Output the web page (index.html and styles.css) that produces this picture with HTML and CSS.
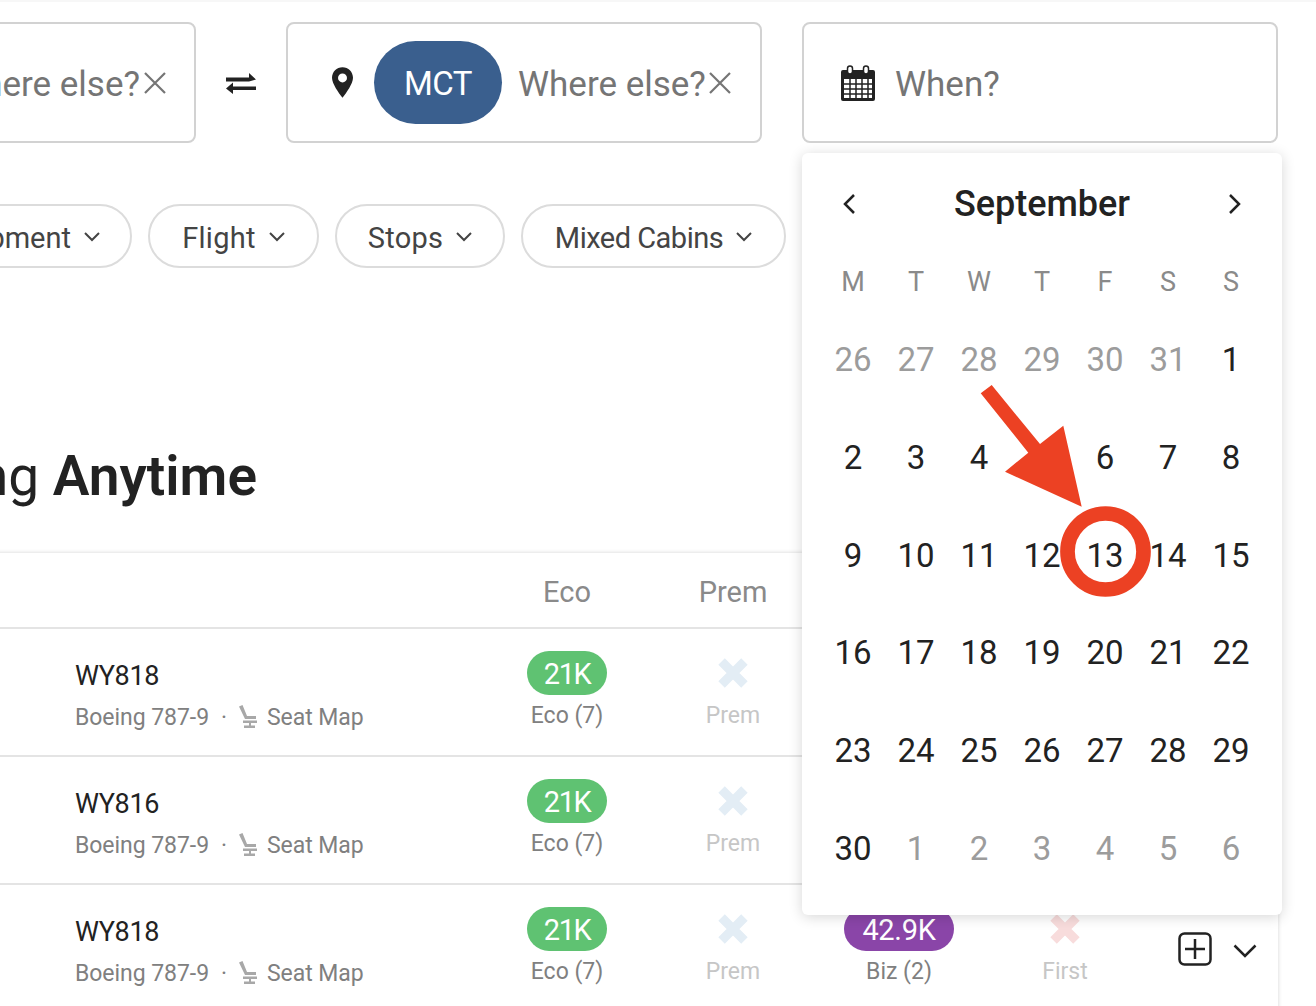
FILE: index.html
```html
<!DOCTYPE html>
<html lang="en">
<head>
  <meta charset="UTF-8" />
  <title>Flight Search</title>
  <link rel="stylesheet" href="styles.css">
</head>
<body>
  <div class="page">
    <div class="search">
      <div class="box box-end">
        <span class="placeholder">Where else?</span>
        <svg class="clear" viewBox="0 0 24 24"><path d="M2 2L22 22M22 2L2 22"/></svg>
      </div>
      <svg class="swap" viewBox="0 0 30 24"><path d="M0 6.500H23V2L30 8.500L23 10.500H0zM30 15.500H7V11.500L0 17.500L7 23V19H30z" /></svg>
      <div class="box box-to">
        <svg class="pin" viewBox="0 0 22 32"><path fill-rule="evenodd" d="M11 0C4.900 0 0 4.900 0 11C0 17 7 27 11 32C15 27 22 17 22 11C22 4.900 17.100 0 11 0zM11 6.500A4.700 4.700 0 1 1 11 15.900A4.700 4.700 0 1 1 11 6.500z"/></svg>
        <span class="code">MCT</span>
        <span class="placeholder">Where else?</span>
        <svg class="clear" viewBox="0 0 24 24"><path d="M2 2L22 22M22 2L2 22"/></svg>
      </div>
      <div class="box box-when">
        <svg class="cal-icon" viewBox="0 0 34 36">
          <path d="M2 5H6V8H12V5H22V8H28V5H32A2 2 0 0 1 34 7V34A2 2 0 0 1 32 36H2A2 2 0 0 1 0 34V7A2 2 0 0 1 2 5z"/>
          <path class="cal-grid" d="M3 14H31V33H3z"/>
          <path class="cal-lines" d="M3 19H31M3 24H31M3 29H31M9 14V33M15 14V33M21 14V33M27 14V33"/>
          <rect class="cal-ring" x="6.500" y="1" width="5" height="8" rx="2.500"/>
          <rect class="cal-ring" x="22.500" y="1" width="5" height="8" rx="2.500"/>
        </svg>
        <span class="placeholder">When?</span>
      </div>
    </div>

    <div class="filters">
      <div class="pill">Equipment <svg class="caret" viewBox="0 0 16 10"><path d="M1 1L8 8L15 1"/></svg></div>
      <div class="pill pill-flight">Flight <svg class="caret" viewBox="0 0 16 10"><path d="M1 1L8 8L15 1"/></svg></div>
      <div class="pill pill-stops">Stops <svg class="caret" viewBox="0 0 16 10"><path d="M1 1L8 8L15 1"/></svg></div>
      <div class="pill pill-cabins">Mixed Cabins <svg class="caret" viewBox="0 0 16 10"><path d="M1 1L8 8L15 1"/></svg></div>
    </div>

    <h1 class="title">Departing <b>Anytime</b></h1>

    <div class="results">
      <div class="row head">
        <div class="flight"></div>
        <div class="cell">Eco</div>
        <div class="cell">Prem</div>
      </div>
      <div class="row">
        <div class="flight">
          <div class="num">WY818</div>
          <div class="info">Boeing 787-9 <i>·</i> <svg class="seat" viewBox="0 0 18 23"><path d="M0 1.500L3.500 0L8 11H17V14H6zM4 15.500H18V18H12V20.500H16V23H5V20.500H10V18H4z"/></svg> Seat Map</div>
        </div>
        <div class="cell"><span class="badge eco">21K</span><span class="label">Eco (7)</span></div>
        <div class="cell"><svg class="none blue" viewBox="0 0 28 28"><path d="M4 4L24 24M24 4L4 24"/></svg><span class="label off">Prem</span></div>
      </div>
      <div class="row">
        <div class="flight">
          <div class="num">WY816</div>
          <div class="info">Boeing 787-9 <i>·</i> <svg class="seat" viewBox="0 0 18 23"><path d="M0 1.500L3.500 0L8 11H17V14H6zM4 15.500H18V18H12V20.500H16V23H5V20.500H10V18H4z"/></svg> Seat Map</div>
        </div>
        <div class="cell"><span class="badge eco">21K</span><span class="label">Eco (7)</span></div>
        <div class="cell"><svg class="none blue" viewBox="0 0 28 28"><path d="M4 4L24 24M24 4L4 24"/></svg><span class="label off">Prem</span></div>
      </div>
      <div class="row">
        <div class="flight">
          <div class="num">WY818</div>
          <div class="info">Boeing 787-9 <i>·</i> <svg class="seat" viewBox="0 0 18 23"><path d="M0 1.500L3.500 0L8 11H17V14H6zM4 15.500H18V18H12V20.500H16V23H5V20.500H10V18H4z"/></svg> Seat Map</div>
        </div>
        <div class="cell"><span class="badge eco">21K</span><span class="label">Eco (7)</span></div>
        <div class="cell"><svg class="none blue" viewBox="0 0 28 28"><path d="M4 4L24 24M24 4L4 24"/></svg><span class="label off">Prem</span></div>
        <div class="cell"><span class="badge biz">42.9K</span><span class="label">Biz (2)</span></div>
        <div class="cell"><svg class="none red" viewBox="0 0 28 28"><path d="M4 4L24 24M24 4L4 24"/></svg><span class="label off">First</span></div>
        <div class="actions">
          <svg class="add" viewBox="0 0 34 34"><rect x="1.500" y="1.500" width="31" height="31" rx="5"/><path d="M17 7V27M7 17H27"/></svg>
          <svg class="expand" viewBox="0 0 24 14"><path d="M1.500 1.500L12 12L22.500 1.500"/></svg>
        </div>
      </div>
    </div>

    <div class="calendar">
      <div class="month">
        <svg class="nav" viewBox="0 0 14 22"><path d="M12 2L3 11L12 20"/></svg>
        <span>September</span>
        <svg class="nav" viewBox="0 0 14 22"><path d="M2 2L11 11L2 20"/></svg>
      </div>
      <div class="days">
        <span class="wd">M</span><span class="wd">T</span><span class="wd">W</span><span class="wd">T</span><span class="wd">F</span><span class="wd">S</span><span class="wd">S</span>
        <span class="out">26</span><span class="out">27</span><span class="out">28</span><span class="out">29</span><span class="out">30</span><span class="out">31</span><span>1</span>
        <span>2</span><span>3</span><span>4</span><span>5</span><span>6</span><span>7</span><span>8</span>
        <span>9</span><span>10</span><span>11</span><span>12</span><span>13</span><span>14</span><span>15</span>
        <span>16</span><span>17</span><span>18</span><span>19</span><span>20</span><span>21</span><span>22</span>
        <span>23</span><span>24</span><span>25</span><span>26</span><span>27</span><span>28</span><span>29</span>
        <span>30</span><span class="out">1</span><span class="out">2</span><span class="out">3</span><span class="out">4</span><span class="out">5</span><span class="out">6</span>
      </div>
    </div>
  </div>

  <!-- red markup drawn on top of the screenshot -->
  <svg class="markup" viewBox="0 0 1316 1006">
    <path d="M980.700 393.300L991.700 385L1040 444L1063.300 425.700L1081.700 506.700L1005 471.700L1028.300 452.700z"/>
    <circle cx="1105.500" cy="551.500" r="38"/>
  </svg>
</body>
</html>
```

FILE: styles.css
```css
* { box-sizing: border-box; }
html, body { margin: 0; height: 100%; overflow: hidden; background: #fff; }
body { font-family: Roboto, "Liberation Sans", sans-serif; color: #222; position: relative; border-top: 2px solid #f7f7f7; }

/* page is wider than the window, its left part is cut off */
.page { position: relative; width: 1558px; margin-left: -280px; padding-top: 20px; }

.search { display: flex; align-items: center; }
.box { display: flex; align-items: center; width: 476px; height: 121px; border: 2px solid #d2d2d2; border-radius: 8px; font-size: 35px; }
.box-end { justify-content: flex-end; padding-right: 27px; }
.box-end .clear { margin-left: 3px; }
.box-to { padding: 0 26px 0 44px; margin-right: 40px; }
.box-when { padding-left: 37px; }
.placeholder { color: #757575; white-space: nowrap; padding-top: 3px; }
.clear { width: 24px; height: 24px; margin-left: 2px; fill: none; stroke: #757575; stroke-width: 2.200; }
.swap { width: 30px; height: 24px; margin: 0 30px; fill: #222; }
.pin { width: 21px; height: 31px; fill: #222; flex: none; }
.code { display: flex; align-items: center; justify-content: center; width: 128px; height: 83px; margin: 0 16px 0 21px; padding-top: 2px; border-radius: 42px; background: #3a5f8e; color: #fff; font-size: 33px; letter-spacing: -.5px; flex: none; }
.cal-icon { width: 34px; height: 36px; margin-right: 20px; fill: #222; }
.cal-grid { fill: #fff; }
.cal-lines { fill: none; stroke: #222; stroke-width: 1.500; }
.cal-ring { fill: #fff; stroke: #222; stroke-width: 1.500; }

.filters { display: flex; justify-content: flex-end; gap: 16px; margin: 61px 492px 0 0; }
.pill { display: flex; align-items: center; justify-content: center; gap: 13px; height: 64px; padding: 3px 30px 0; border: 2px solid #dcdcdc; border-radius: 32px; font-size: 29px; color: #444; white-space: nowrap; }
.pill-flight { width: 171px; padding: 3px 0 0; letter-spacing: .3px; }
.pill-stops { width: 170px; padding: 3px 0 0; letter-spacing: .3px; }
.pill-cabins { width: 265px; padding: 3px 0 0; letter-spacing: -.5px; }
.caret { width: 16px; height: 10px; margin-top: -2px; fill: none; stroke: #444; stroke-width: 2; }

.title { width: 537px; margin: 172px 0 0; height: 72px; line-height: 72px; font-size: 55px; font-weight: 400; text-align: right; white-space: nowrap; }
.title b { font-weight: 600; }

.results { margin-top: 41px; width: 1558px; box-shadow: 0 0 4px rgba(0, 0, 0, .18); }
.row { display: flex; height: 128px; border-bottom: 2px solid #e4e4e4; }
.head { height: 76px; align-items: center; padding-top: 3px; font-size: 29px; color: #8a8a8a; }
.flight { width: 764px; padding: 29px 0 0 355px; flex: none; }
.num { font-size: 27px; line-height: 36px; letter-spacing: -.3px; }
.info { display: flex; align-items: center; gap: 10px; margin-top: 8px; font-size: 23px; line-height: 32px; letter-spacing: -.05px; color: #808080; white-space: nowrap; }
.info i { font-style: normal; margin: 0 2px; }
.seat { width: 18px; height: 23px; fill: #a8a8a8; margin-bottom: 4px; }
.cell { display: flex; flex-direction: column; align-items: center; width: 166px; flex: none; }
.row:not(.head) .cell { padding-top: 22px; }
.badge { display: flex; align-items: center; justify-content: center; height: 44px; border-radius: 22px; color: #fff; font-size: 29px; padding-top: 2px; }
.eco { width: 80px; background: #5fc272; letter-spacing: -1.500px; }
.biz { width: 110px; background: #8a45a8; letter-spacing: -.3px; }
.label { margin-top: 6px; font-size: 23px; line-height: 30px; color: #808080; }
.off { color: #c6c6c6; }
.none { width: 32px; height: 32px; margin: 6px 0; fill: none; stroke-width: 8; }
.blue { stroke: #e3edf5; }
.red { stroke: #f8dcdc; }
.actions { display: flex; align-items: flex-start; gap: 21px; padding: 47px 0 0 30px; }
.add { width: 34px; height: 34px; fill: none; stroke: #222; stroke-width: 2.500; }
.expand { width: 24px; height: 14px; margin-top: 12px; fill: none; stroke: #222; stroke-width: 2.500; }

.calendar { position: absolute; top: 151px; left: 1082px; width: 480px; height: 762px; padding: 0 20px; background: #fff; border-radius: 6px; box-shadow: 0 2px 14px rgba(0, 0, 0, .16); }
.month { display: flex; align-items: center; justify-content: space-between; height: 100px; padding: 2px 20px 0; font-size: 36px; font-weight: 500; }
.nav { width: 14px; height: 22px; fill: none; stroke: #222; stroke-width: 2.500; }
.days { display: grid; grid-template-columns: repeat(7, 63px); grid-template-rows: 58px repeat(6, 97.700px); justify-content: center; font-size: 33px; }
.days span { display: flex; align-items: center; justify-content: center; }
.days .wd { font-size: 27px; color: #8a8a8a; }
.days .out { color: #9c9c9c; }

.markup { position: absolute; top: -2px; left: 0; width: 1316px; height: 1006px; pointer-events: none; }
.markup path { fill: #ec4123; }
.markup circle { fill: none; stroke: #ec4123; stroke-width: 14.700; }
```
